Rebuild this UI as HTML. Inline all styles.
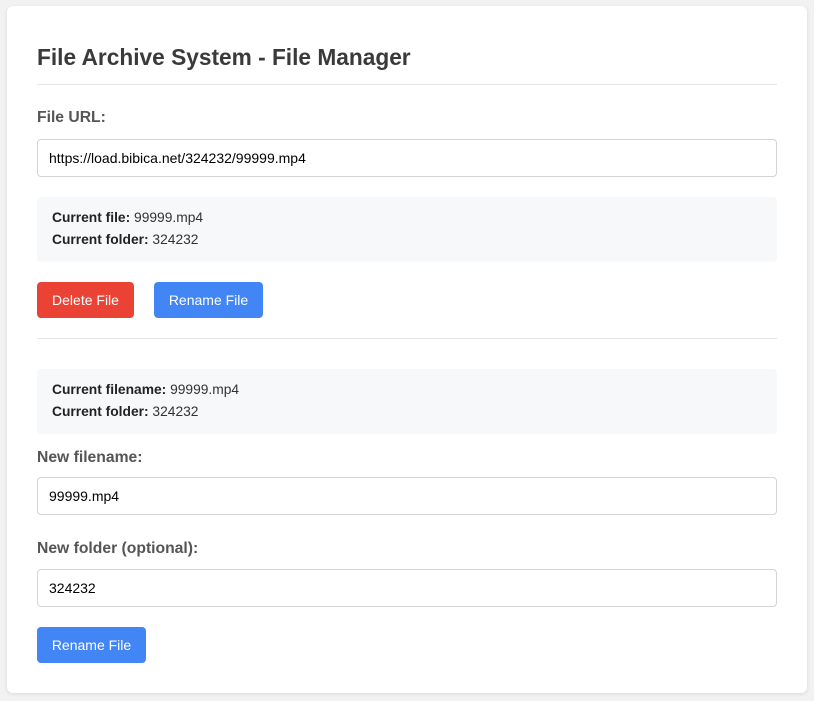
<!DOCTYPE html>
<html><head><meta charset="utf-8"><style>
*{box-sizing:border-box;margin:0;padding:0}
body{background:#f2f2f2;width:814px;height:701px;font-family:"Liberation Sans",sans-serif;position:relative}
.card{position:absolute;left:7px;top:6px;width:800px;height:687px;background:#fff;border-radius:6px;box-shadow:0 1px 4px rgba(0,0,0,.1)}
.a{position:absolute;left:30px}
h1{font-size:22.7px;font-weight:bold;color:#3a3a3a;top:38px}
.hr{height:1px;background:#e6e6e6;width:740px}
.lbl{font-size:15.7px;font-weight:bold;color:#555}
.inp{width:740px;height:38px;border:1px solid #d4d4d4;border-radius:4px;font-size:14px;color:#000;padding:0 11px;line-height:36px}
.info{width:740px;height:65px;background:#f7f8f9;border-radius:4px;padding:10px 15px;font-size:13.8px;color:#333;line-height:22px}
.info b{color:#222}
.btn{height:36px;border-radius:4px;color:#fff;font-size:14px;line-height:36px;text-align:center}
</style></head><body>
<div class="card">
<h1 class="a">File Archive System - File Manager</h1>
<div class="a hr" style="top:78px"></div>
<div class="a lbl" style="top:103px">File URL:</div>
<div class="a inp" style="top:133px">https://load.bibica.net/324232/99999.mp4</div>
<div class="a info" style="top:191px"><b>Current file:</b> 99999.mp4<br><b>Current folder:</b> 324232</div>
<div class="a btn" style="top:276px;width:97px;background:#ea4335">Delete File</div>
<div class="a btn" style="top:276px;left:147px;width:109px;background:#4285f4">Rename File</div>
<div class="a hr" style="top:332px"></div>
<div class="a info" style="top:363px"><b>Current filename:</b> 99999.mp4<br><b>Current folder:</b> 324232</div>
<div class="a lbl" style="top:443px">New filename:</div>
<div class="a inp" style="top:471px">99999.mp4</div>
<div class="a lbl" style="top:534px">New folder (optional):</div>
<div class="a inp" style="top:563px">324232</div>
<div class="a btn" style="top:621px;width:109px;background:#4285f4">Rename File</div>
</div>
</body></html>
